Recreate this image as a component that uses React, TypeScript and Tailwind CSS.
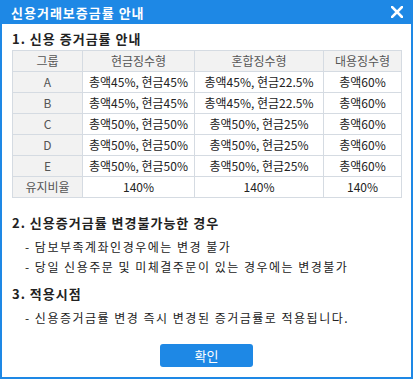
const font = { fontFamily: '"Noto Sans CJK KR", "Noto Sans", sans-serif' };

const rows = [
  { group: "A", cash: "총액45%, 현금45%", mixed: "총액45%, 현금22.5%", sub: "총액60%" },
  { group: "B", cash: "총액45%, 현금45%", mixed: "총액45%, 현금22.5%", sub: "총액60%" },
  { group: "C", cash: "총액50%, 현금50%", mixed: "총액50%, 현금25%", sub: "총액60%" },
  { group: "D", cash: "총액50%, 현금50%", mixed: "총액50%, 현금25%", sub: "총액60%" },
  { group: "E", cash: "총액50%, 현금50%", mixed: "총액50%, 현금25%", sub: "총액60%" },
  { group: "유지비율", cash: "140%", mixed: "140%", sub: "140%" }
];

function CloseIcon() {
  return (
    <svg width="12" height="12" viewBox="0 0 12 12" aria-hidden="true">
      <path d="M1 1 L11 11 M11 1 L1 11" stroke="white" strokeWidth="2.6" strokeLinecap="square" />
    </svg>
  );
}

export default function App() {
  const th = "h-[21px] border border-[#d5dbe2] bg-[#f2f2f2] p-0 text-center font-normal text-[#555]";
  const td = "h-[21px] border border-[#d5dbe2] p-0 text-center text-[#222]";

  return (
    <div style={font} className="flex h-[379px] w-[413px] flex-col bg-[#1e88e5]">
      <div className="flex h-[24px] shrink-0 items-center justify-between pl-[11px] pr-[10px]">
        <span className="text-[13px] font-bold leading-none tracking-[1px] text-white">신용거래보증금률 안내</span>
        <CloseIcon />
      </div>

      <div className="mx-[2px] mb-[2px] flex flex-1 flex-col bg-white px-[10px] pt-[5px]">
        <h2 className="text-[13px] font-bold leading-[20px] tracking-[1px] text-[#222]">1. 신용 증거금률 안내</h2>

        <table className="mt-[1px] w-[389px] table-fixed border-collapse border border-[#999] text-[12px] leading-none">
          <colgroup>
            <col className="w-[70px]" />
            <col className="w-[112px]" />
            <col className="w-[129px]" />
            <col className="w-[78px]" />
          </colgroup>
          <thead>
            <tr>
              <th className={th}>그룹</th>
              <th className={th}>현금징수형</th>
              <th className={th}>혼합징수형</th>
              <th className={th}>대용징수형</th>
            </tr>
          </thead>
          <tbody>
            {rows.map((r) => (
              <tr key={r.group}>
                <td className={`${td} bg-[#f2f2f2] !text-[#555]`}>{r.group}</td>
                <td className={td}>{r.cash}</td>
                <td className={td}>{r.mixed}</td>
                <td className={td}>{r.sub}</td>
              </tr>
            ))}
          </tbody>
        </table>

        <h2 className="mt-[16px] text-[13px] font-bold leading-[18px] tracking-[1px] text-[#222]">
          2. 신용증거금률 변경불가능한 경우
        </h2>
        <ul className="mt-[5px] pl-[13px] text-[12px] leading-[20px] tracking-[1.5px] text-[#222]">
          <li>- 담보부족계좌인경우에는 변경 불가</li>
          <li>- 당일 신용주문 및 미체결주문이 있는 경우에는 변경불가</li>
        </ul>

        <h2 className="mt-[8px] text-[13px] font-bold leading-[18px] tracking-[1px] text-[#222]">3. 적용시점</h2>
        <ul className="mt-[5px] pl-[13px] text-[12px] leading-[20px] tracking-[1.5px] text-[#222]">
          <li>- 신용증거금률 변경 즉시 변경된 증거금률로 적용됩니다.</li>
        </ul>

        <div className="mt-[16px] flex justify-center">
          <button
            type="button"
            className="h-[23px] w-[93px] rounded-[3px] bg-[#1e88e5] text-[13px] leading-none text-white"
          >
            확인
          </button>
        </div>
      </div>
    </div>
  );
}
